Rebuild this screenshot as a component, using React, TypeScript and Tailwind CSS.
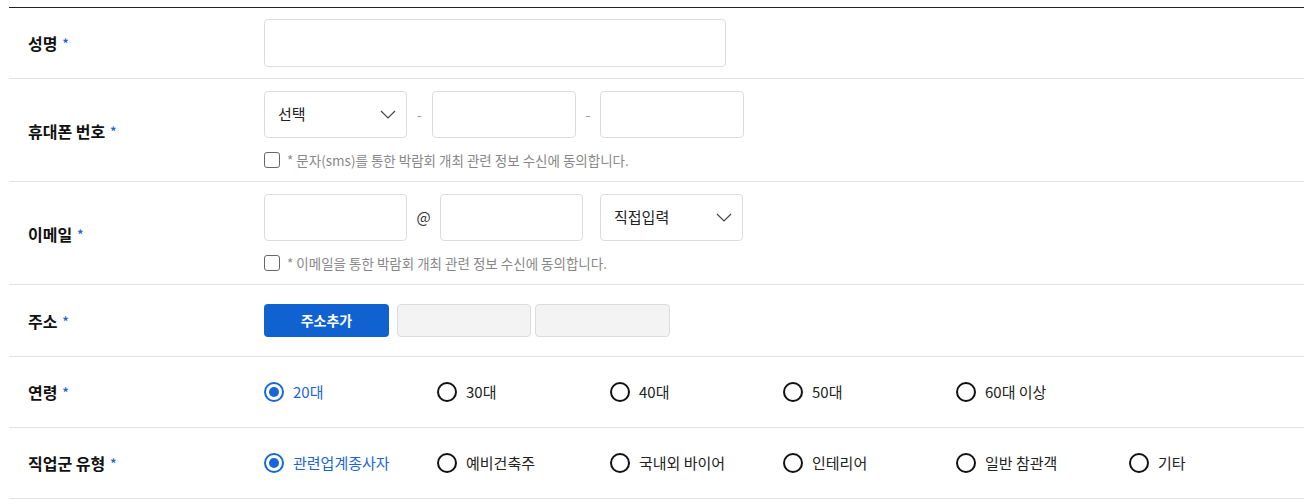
import React from 'react';

const font = { fontFamily: '"Noto Sans CJK KR", "Noto Sans", sans-serif' };

const Label: React.FC<{ text: string }> = ({ text }) => (
  <div className="w-[255px] shrink-0 pl-[19px] flex items-center text-[16px] font-semibold text-[#111]">
    {text}
    <span className="ml-[5px] text-[12px] text-[#1a66d6] leading-none">*</span>
  </div>
);

const Chevron = () => (
  <svg width="16" height="9" viewBox="0 0 16 9" fill="none" stroke="#444" strokeWidth="1.2">
    <path d="M1 1l7 7 7-7" />
  </svg>
);

const Select: React.FC<{ value: string }> = ({ value }) => (
  <div className="w-[143px] h-[47px] border border-[#dcdcdc] rounded-[4px] flex items-center justify-between pl-[13px] pr-[10px] text-[15px] text-[#222]">
    <span>{value}</span>
    <Chevron />
  </div>
);

const Input: React.FC<{ w: string; h?: string }> = ({ w, h = 'h-[47px]' }) => (
  <div className={`${w} ${h} border border-[#dcdcdc] rounded-[4px] bg-white`} />
);

const Agree: React.FC<{ text: string }> = ({ text }) => (
  <div className="flex items-center gap-[7px] mt-3 h-5">
    <span className="w-4 h-4 border border-[#666] rounded-[3px] bg-white" />
    <span className="text-[13.5px] text-[#888]">* {text}</span>
  </div>
);

const Radio: React.FC<{ label: string; checked?: boolean }> = ({ label, checked }) => (
  <div className="w-[173px] flex items-center gap-[9px]">
    {checked ? (
      <span className="w-5 h-5 rounded-full border-2 border-[#1a66d6] flex items-center justify-center">
        <span className="w-[10px] h-[10px] rounded-full bg-[#1a66d6]" />
      </span>
    ) : (
      <span className="w-5 h-5 rounded-full border-2 border-[#111]" />
    )}
    <span className={`text-[15px] ${checked ? 'text-[#1a66d6]' : 'text-[#222]'}`}>{label}</span>
  </div>
);

export default function App() {
  return (
    <div className="bg-white w-[1304px] h-[504px] pt-[7px]" style={font}>
      <div className="ml-[9px] border-t border-[#222]">
        <div className="flex border-b border-[#e2e2e2] py-[11px]">
          <Label text="성명" />
          <Input w="w-[462px]" h="h-12" />
        </div>

        <div className="flex border-b border-[#e2e2e2] pt-3 pb-[11px]">
          <Label text="휴대폰 번호" />
          <div className="flex flex-col">
            <div className="flex items-center">
              <Select value="선택" />
              <span className="w-[25px] text-center text-[#999] text-[14px]">-</span>
              <Input w="w-[144px]" />
              <span className="w-6 text-center text-[#999] text-[14px]">-</span>
              <Input w="w-[144px]" />
            </div>
            <Agree text="문자(sms)를 통한 박람회 개최 관련 정보 수신에 동의합니다." />
          </div>
        </div>

        <div className="flex border-b border-[#e2e2e2] pt-3 pb-[11px]">
          <Label text="이메일" />
          <div className="flex flex-col">
            <div className="flex items-center">
              <Input w="w-[143px]" />
              <span className="w-[33px] text-center text-[#333] text-[15px]">@</span>
              <Input w="w-[143px]" />
              <span className="w-[17px]" />
              <Select value="직접입력" />
            </div>
            <Agree text="이메일을 통한 박람회 개최 관련 정보 수신에 동의합니다." />
          </div>
        </div>

        <div className="flex items-center border-b border-[#e2e2e2] h-[72px]">
          <Label text="주소" />
          <div className="flex items-center">
            <button className="w-[125px] h-[33px] rounded-[4px] bg-[#0f62d0] text-white text-[14px] font-semibold">
              주소추가
            </button>
            <div className="ml-2 w-[134px] h-[33px] rounded-[4px] border border-[#dcdcdc] bg-[#f3f3f3]" />
            <div className="ml-1 w-[135px] h-[33px] rounded-[4px] border border-[#dcdcdc] bg-[#f3f3f3]" />
          </div>
        </div>

        <div className="flex items-center border-b border-[#e2e2e2] h-[71px]">
          <Label text="연령" />
          <div className="flex">
            <Radio label="20대" checked />
            <Radio label="30대" />
            <Radio label="40대" />
            <Radio label="50대" />
            <Radio label="60대 이상" />
          </div>
        </div>

        <div className="flex items-center border-b border-[#e2e2e2] h-[71px]">
          <Label text="직업군 유형" />
          <div className="flex">
            <Radio label="관련업계종사자" checked />
            <Radio label="예비건축주" />
            <Radio label="국내외 바이어" />
            <Radio label="인테리어" />
            <Radio label="일반 참관객" />
            <Radio label="기타" />
          </div>
        </div>
      </div>
    </div>
  );
}
